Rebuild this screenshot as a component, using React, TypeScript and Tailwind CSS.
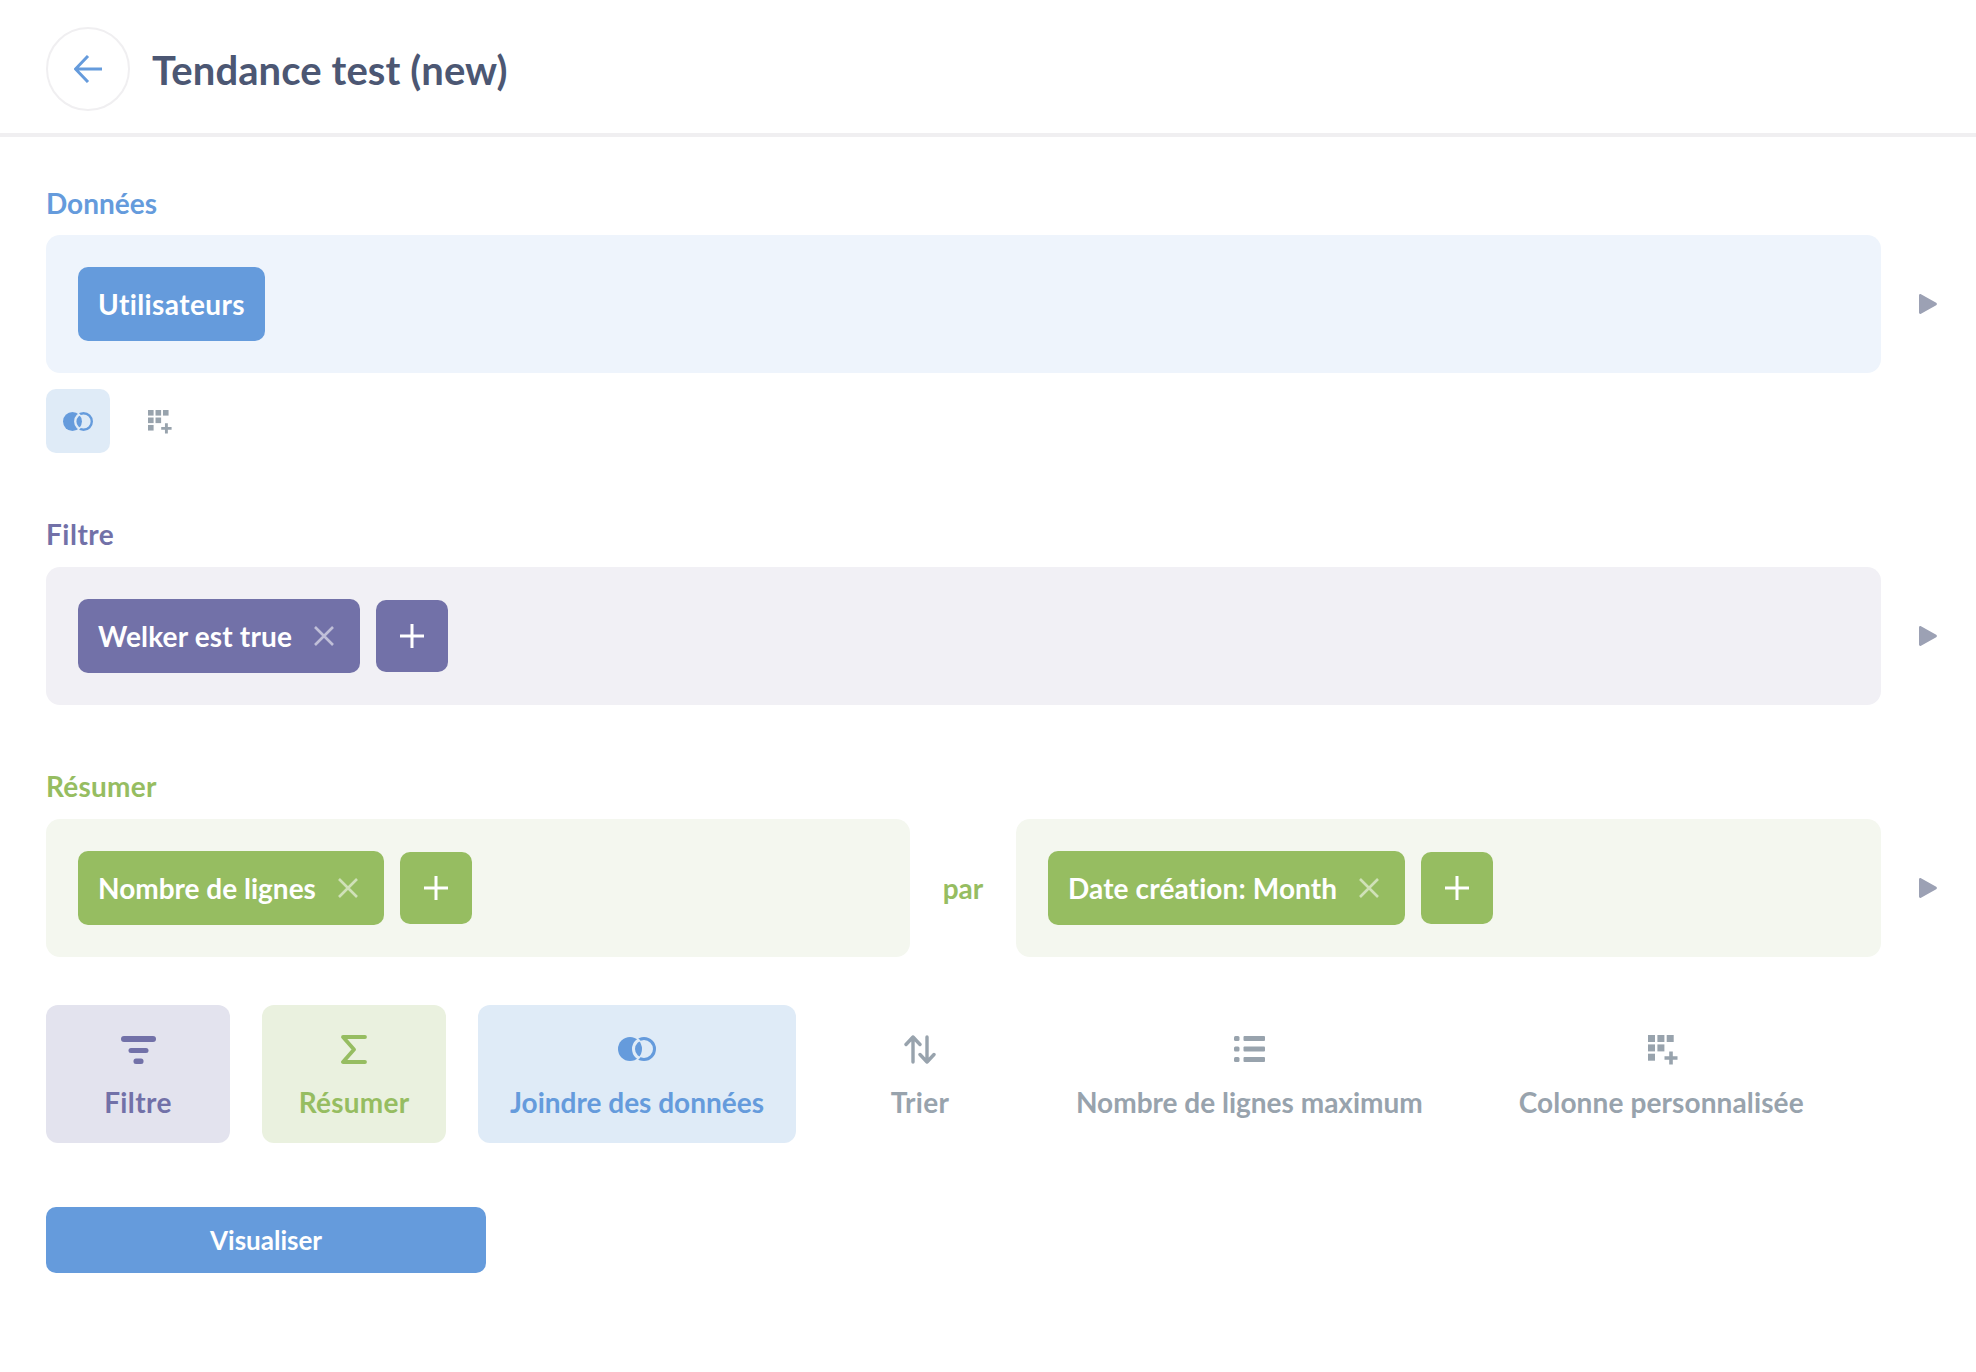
import React from 'react';

const JoinIcon = ({ className }: { className: string }) => (
  <svg viewBox="0 0 38 24" className={className}>
    <defs>
      <mask id="joinLeft">
        <rect width="38" height="24" fill="white" />
        <circle cx="26" cy="12" r="10.5" fill="none" stroke="black" strokeWidth="3" />
      </mask>
      <mask id="joinRight">
        <rect width="38" height="24" fill="white" />
        <circle cx="12" cy="12" r="13.4" fill="black" />
      </mask>
    </defs>
    <circle cx="12" cy="12" r="12" fill="currentColor" mask="url(#joinLeft)" />
    <circle cx="26" cy="12" r="10.5" fill="none" stroke="currentColor" strokeWidth="3" mask="url(#joinRight)" />
  </svg>
);

const ColumnIcon = ({ className }: { className: string }) => (
  <svg viewBox="0 0 30 30" fill="currentColor" className={className}>
    <rect x="0" y="0" width="7" height="7" />
    <rect x="9.4" y="0" width="7" height="7" />
    <rect x="18.7" y="0" width="7" height="7" />
    <rect x="0" y="9.4" width="7" height="7" />
    <rect x="9.4" y="9.4" width="7" height="7" />
    <rect x="0" y="18.7" width="7" height="7" />
    <path d="M23 16.5v13M16.5 23h13" stroke="currentColor" strokeWidth="3.6" fill="none" />
  </svg>
);

const FilterIcon = () => (
  <svg viewBox="0 0 35 28" fill="currentColor" className="mt-[2px] h-[28px] w-[35px]">
    <rect x="0" y="0" width="35" height="6" rx="3" />
    <rect x="7.5" y="12" width="20" height="5" rx="2.5" />
    <rect x="12.5" y="22.5" width="10" height="5.5" rx="2.5" />
  </svg>
);

const SigmaIcon = () => (
  <svg viewBox="0 0 26 29" fill="none" stroke="currentColor" strokeWidth="3.8" strokeLinecap="round" strokeLinejoin="round" className="h-[29px] w-[26px]">
    <path d="M24 2H2l11 12.5L2 27h22" />
  </svg>
);

const SortIcon = () => (
  <svg viewBox="0 0 32 29" fill="none" stroke="currentColor" strokeWidth="3.4" strokeLinecap="round" strokeLinejoin="round" className="h-[29px] w-[32px]">
    <path d="M9 27V2M2 9.5 9 2l7 7.5" />
    <path d="M23 2v25M16 19.5l7 7.5 7-7.5" />
  </svg>
);

const ListIcon = () => (
  <svg viewBox="0 0 31 26" fill="currentColor" className="h-[26px] w-[31px]">
    <rect x="0" y="0" width="5.5" height="5" rx="1.5" />
    <rect x="9.5" y="0" width="21.5" height="5" rx="1" />
    <rect x="0" y="10.5" width="5.5" height="5" rx="1.5" />
    <rect x="9.5" y="10.5" width="21.5" height="5" rx="1" />
    <rect x="0" y="21" width="5.5" height="5" rx="1.5" />
    <rect x="9.5" y="21" width="21.5" height="5" rx="1" />
  </svg>
);

const CloseIcon = () => (
  <svg viewBox="0 0 20 20" fill="none" stroke="currentColor" strokeWidth="2.6" className="h-[20px] w-[20px] text-white/55">
    <path d="M1 1l18 18M19 1 1 19" />
  </svg>
);

const PlusIcon = () => (
  <svg viewBox="0 0 24 24" fill="none" stroke="currentColor" strokeWidth="3" className="h-[24px] w-[24px]">
    <path d="M12 0v24M0 12h24" />
  </svg>
);

const RowArrow = () => (
  <svg viewBox="0 0 18 20" fill="currentColor" className="h-[20px] w-[18px] shrink-0 text-[#9ca1b4]">
    <path d="M0 1.5C0 .4 1 -.3 2 .3l15.2 8.5c.9.5.9 1.9 0 2.4L2 19.7c-1 .6-2 -.1-2 -1.2z" />
  </svg>
);

const Chip = ({ label, bg, tracking = '' }: { label: string; bg: string; tracking?: string }) => (
  <div className={`flex h-[74px] items-center gap-[22px] rounded-[10px] pl-[20px] pr-[26px] text-[28px] font-bold text-white ${bg}`}>
    <span className={tracking}>{label}</span>
    <CloseIcon />
  </div>
);

const AddButton = ({ bg }: { bg: string }) => (
  <button className={`ml-[16px] flex h-[72px] w-[72px] items-center justify-center rounded-[10px] text-white ${bg}`}>
    <PlusIcon />
  </button>
);

const Card = ({ bg, children, className = '' }: { bg: string; children: React.ReactNode; className?: string }) => (
  <div className={`flex h-[138px] items-center rounded-[14px] px-[32px] ${bg} ${className}`}>{children}</div>
);

const actions = [
  { label: 'Filtre', icon: <FilterIcon />, cls: 'min-w-[184px] bg-[#e3e3ee] text-[#7271a8]', text: 'tracking-[0.4px]' },
  { label: 'Résumer', icon: <SigmaIcon />, cls: 'min-w-[184px] bg-[#eaf1df] text-[#96bd61]', text: 'tracking-[0.25px]' },
  { label: 'Joindre des données', icon: <JoinIcon className="h-[24px] w-[38px]" />, cls: 'min-w-[184px] bg-[#dfebf7] text-[#659bdc]', text: '' },
  { label: 'Trier', icon: <SortIcon />, cls: 'min-w-[184px] text-[#98a3ad]', text: 'tracking-[0.3px]' },
  { label: 'Nombre de lignes maximum', icon: <ListIcon />, cls: 'min-w-[184px] text-[#98a3ad]', text: '' },
  { label: 'Colonne personnalisée', icon: <ColumnIcon className="ml-[3px] mt-[2px] h-[30px] w-[30px]" />, cls: 'min-w-[184px] text-[#98a3ad]', text: 'tracking-[0.12px]' },
];

export default function App() {
  return (
    <div className="min-h-[1372px] bg-white font-['Lato',sans-serif] [font-variant-ligatures:none]">
      <header className="flex h-[137px] items-center border-b-4 border-[#f0eff1] pl-[46px] pt-[4px]">
        <button className="flex h-[84px] w-[84px] items-center justify-center rounded-full border-2 border-[#f0eff1] text-[#659bdc]">
          <svg viewBox="0 0 28 28" fill="none" stroke="currentColor" strokeWidth="3" className="h-[28px] w-[28px]">
            <path d="M28 14H2M14 1 1.5 14 14 27" />
          </svg>
        </button>
        <h1 className="ml-[22px] mt-[2px] text-[40px] font-bold tracking-[0.1px] text-[#4c5773]">Tendance test (new)</h1>
      </header>

      <main className="pl-[46px] pr-[39px] pt-[50px]">
        <div className="mb-[16px] text-[28px] font-bold leading-[32px] text-[#659bdc]">Données</div>
        <div className="flex items-center gap-[38px]">
          <Card bg="bg-[#eef4fc]" className="flex-1">
            <div className="flex h-[74px] items-center rounded-[10px] bg-[#659bdc] px-[20px] text-[28px] font-bold tracking-[0.4px] text-white">Utilisateurs</div>
          </Card>
          <RowArrow />
        </div>
        <div className="mt-[16px] flex gap-[18px]">
          <button className="flex h-[64px] w-[64px] items-center justify-center rounded-[10px] bg-[#dfebf7] text-[#659bdc]">
            <JoinIcon className="h-[19px] w-[30px]" />
          </button>
          <button className="flex h-[64px] w-[64px] items-center justify-center text-[#98a3ad]">
            <ColumnIcon className="mt-[2px] h-[24px] w-[24px]" />
          </button>
        </div>

        <div className="mb-[17px] mt-[65px] text-[28px] font-bold leading-[32px] tracking-[0.5px] text-[#7271a8]">Filtre</div>
        <div className="flex items-center gap-[38px]">
          <Card bg="bg-[#f1f0f5]" className="flex-1">
            <Chip label="Welker est true" bg="bg-[#7271a8]" tracking="tracking-[0.17px]" />
            <AddButton bg="bg-[#7271a8]" />
          </Card>
          <RowArrow />
        </div>

        <div className="mb-[17px] mt-[65px] text-[28px] font-bold leading-[32px] tracking-[0.25px] text-[#96bd61]">Résumer</div>
        <div className="flex items-center gap-[38px]">
          <div className="flex flex-1 items-center">
            <Card bg="bg-[#f4f7ef]" className="w-[864px]">
              <Chip label="Nombre de lignes" bg="bg-[#96bd61]" />
              <AddButton bg="bg-[#96bd61]" />
            </Card>
            <span className="w-[106px] text-center text-[28px] font-bold text-[#96bd61]">par</span>
            <Card bg="bg-[#f4f7ef]" className="flex-1">
              <Chip label="Date création: Month" bg="bg-[#96bd61]" tracking="tracking-[0.12px]" />
              <AddButton bg="bg-[#96bd61]" />
            </Card>
          </div>
          <RowArrow />
        </div>

        <div className="mt-[48px] flex gap-[32px]">
          {actions.map((a) => (
            <button key={a.label} className={`flex h-[138px] flex-col items-center rounded-[12px] px-[32px] pt-[29px] ${a.cls}`}>
              <span className="flex h-[30px] items-center justify-center">{a.icon}</span>
              <span className={`mt-[22px] text-[28px] font-bold leading-[32px] ${a.text}`}>{a.label}</span>
            </button>
          ))}
        </div>

        <button className="mt-[64px] block h-[66px] w-[440px] rounded-[10px] bg-[#659bdc] text-[26px] font-bold text-white">Visualiser</button>
      </main>
    </div>
  );
}
